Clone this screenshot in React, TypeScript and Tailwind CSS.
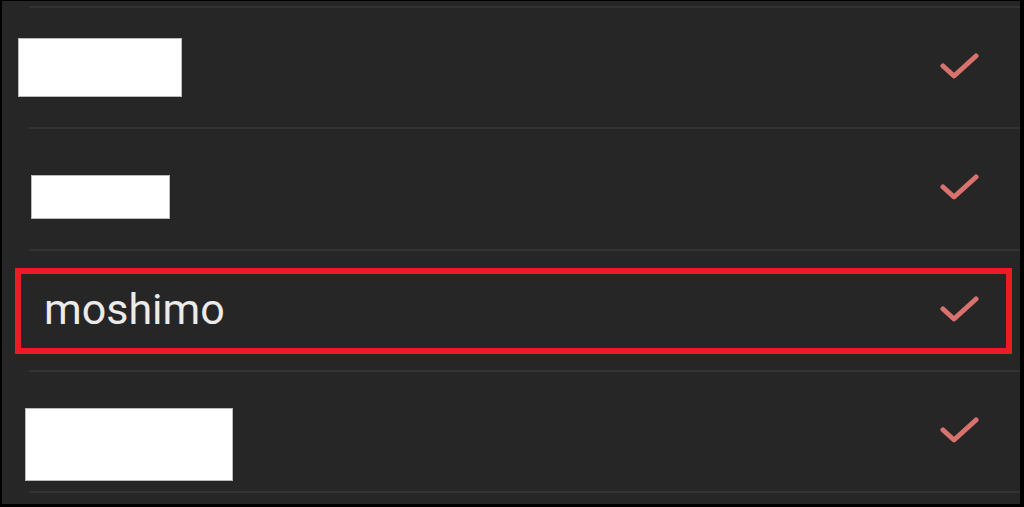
import React from "react"

const Check: React.FC = () => (
  <svg width="40" height="30" viewBox="0 0 40 30" className="shrink-0">
    <path d="M3 13 L14 23 L36 3" fill="none" stroke="#d9726d" strokeWidth="5" strokeLinecap="round" strokeLinejoin="round" />
  </svg>
)

const Divider: React.FC = () => <div className="h-[2px] ml-[27px] bg-[#343334]" />

const App: React.FC = () => {
  return (
    <div className="w-[1024px] h-[507px] bg-black pl-[2px] pt-[1px] pr-[4px] pb-[3px] font-['Roboto',sans-serif]">
      <div className="h-full bg-[#272627] pt-[5px] flex flex-col">
        <Divider />
        <div className="h-[119px] flex items-center justify-between pl-[16px] pr-[40px]">
          <div className="w-[164px] h-[59px] bg-white border border-[#bbb]" />
          <Check />
        </div>
        <Divider />
        <div className="h-[120px] flex items-center justify-between pl-[29px] pr-[40px]">
          <div className="w-[139px] h-[44px] mt-[16px] bg-white border border-[#bbb]" />
          <Check />
        </div>
        <Divider />
        <div className="h-[119px] flex items-center pl-[13px] pr-[8px]">
          <div className="flex-1 h-[86px] border-[6px] border-[#ec1c24] flex items-center justify-between pl-[23px] pr-[26px]">
            <span className="text-[43px] leading-none text-[#ebebeb] -mt-[2px]">moshimo</span>
            <Check />
          </div>
        </div>
        <Divider />
        <div className="h-[119px] flex items-center justify-between pl-[23px] pr-[40px]">
          <div className="w-[208px] h-[73px] mt-[25px] bg-white border border-[#bbb]" />
          <Check />
        </div>
        <Divider />
      </div>
    </div>
  )
}

export default App
